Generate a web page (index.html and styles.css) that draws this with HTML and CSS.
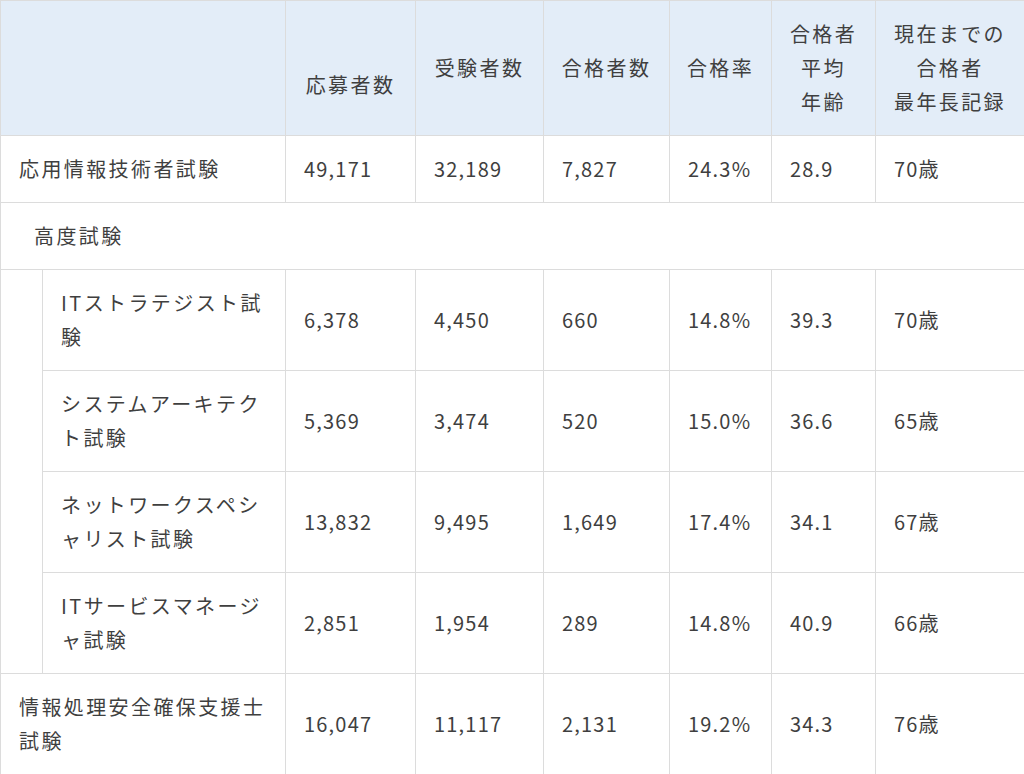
FILE: index.html
```html
<!DOCTYPE html>
<html lang="ja">
<head>
<meta charset="utf-8">
<link rel="stylesheet" href="styles.css">
</head>
<body>
<table class="stats">
  <colgroup>
    <col class="c-indent">
    <col class="c-name">
    <col class="c-a">
    <col class="c-b">
    <col class="c-c">
    <col class="c-d">
    <col class="c-e">
    <col class="c-f">
  </colgroup>
  <thead>
    <tr>
      <th colspan="2"></th>
      <th><br>応募者数</th>
      <th>受験者数</th>
      <th>合格者数</th>
      <th>合格率</th>
      <th>合格者<br>平均<br>年齢</th>
      <th>現在までの<br>合格者<br>最年長記録</th>
    </tr>
  </thead>
  <tbody>
    <tr>
      <td colspan="2" class="name">応用情報技術者試験</td>
      <td class="num">49,171</td><td class="num">32,189</td><td class="num">7,827</td><td class="num">24.3%</td><td class="num">28.9</td><td class="num">70歳</td>
    </tr>
    <tr>
      <td colspan="8" class="group">高度試験</td>
    </tr>
    <tr>
      <td rowspan="4" class="indent"></td>
      <td class="name">ITストラテジスト試験</td>
      <td class="num">6,378</td><td class="num">4,450</td><td class="num">660</td><td class="num">14.8%</td><td class="num">39.3</td><td class="num">70歳</td>
    </tr>
    <tr>
      <td class="name">システムアーキテクト試験</td>
      <td class="num">5,369</td><td class="num">3,474</td><td class="num">520</td><td class="num">15.0%</td><td class="num">36.6</td><td class="num">65歳</td>
    </tr>
    <tr>
      <td class="name">ネットワークスペシャリスト試験</td>
      <td class="num">13,832</td><td class="num">9,495</td><td class="num">1,649</td><td class="num">17.4%</td><td class="num">34.1</td><td class="num">67歳</td>
    </tr>
    <tr>
      <td class="name">ITサービスマネージャ試験</td>
      <td class="num">2,851</td><td class="num">1,954</td><td class="num">289</td><td class="num">14.8%</td><td class="num">40.9</td><td class="num">66歳</td>
    </tr>
    <tr>
      <td colspan="2" class="name">情報処理安全確保支援士試験</td>
      <td class="num">16,047</td><td class="num">11,117</td><td class="num">2,131</td><td class="num">19.2%</td><td class="num">34.3</td><td class="num">76歳</td>
    </tr>
  </tbody>
</table>
</body>
</html>
```

FILE: styles.css
```css
html, body {
  margin: 0;
  padding: 0;
  background: #ffffff;
}

body {
  font-family: "Noto Sans CJK JP", "Noto Sans", sans-serif;
  color: #3f3f3f;
}

.stats {
  width: 1024px;
  table-layout: fixed;
  border-collapse: collapse;
  font-size: 20px;
  line-height: 34px;
  letter-spacing: 2.4px;
}

.c-indent { width: 42px; }
.c-name { width: 243px; }
.c-a { width: 130px; }
.c-b { width: 128px; }
.c-c { width: 126px; }
.c-d { width: 102px; }
.c-e { width: 104px; }
.c-f { width: 149px; }

.stats th,
.stats td {
  border: 1px solid #dcdcdc;
  padding: 16px 18px;
  vertical-align: middle;
}

.stats th {
  background: #e3edf8;
  font-weight: normal;
  text-align: center;
  padding-left: 4px;
  padding-right: 4px;
}

.stats td {
  text-align: left;
}

.stats td.name {
  word-break: break-all;
}

.stats td.num {
  white-space: nowrap;
  letter-spacing: 1.2px;
}

.stats td.group {
  padding-left: 33px;
}

.stats td.indent {
  padding: 0;
}
```
